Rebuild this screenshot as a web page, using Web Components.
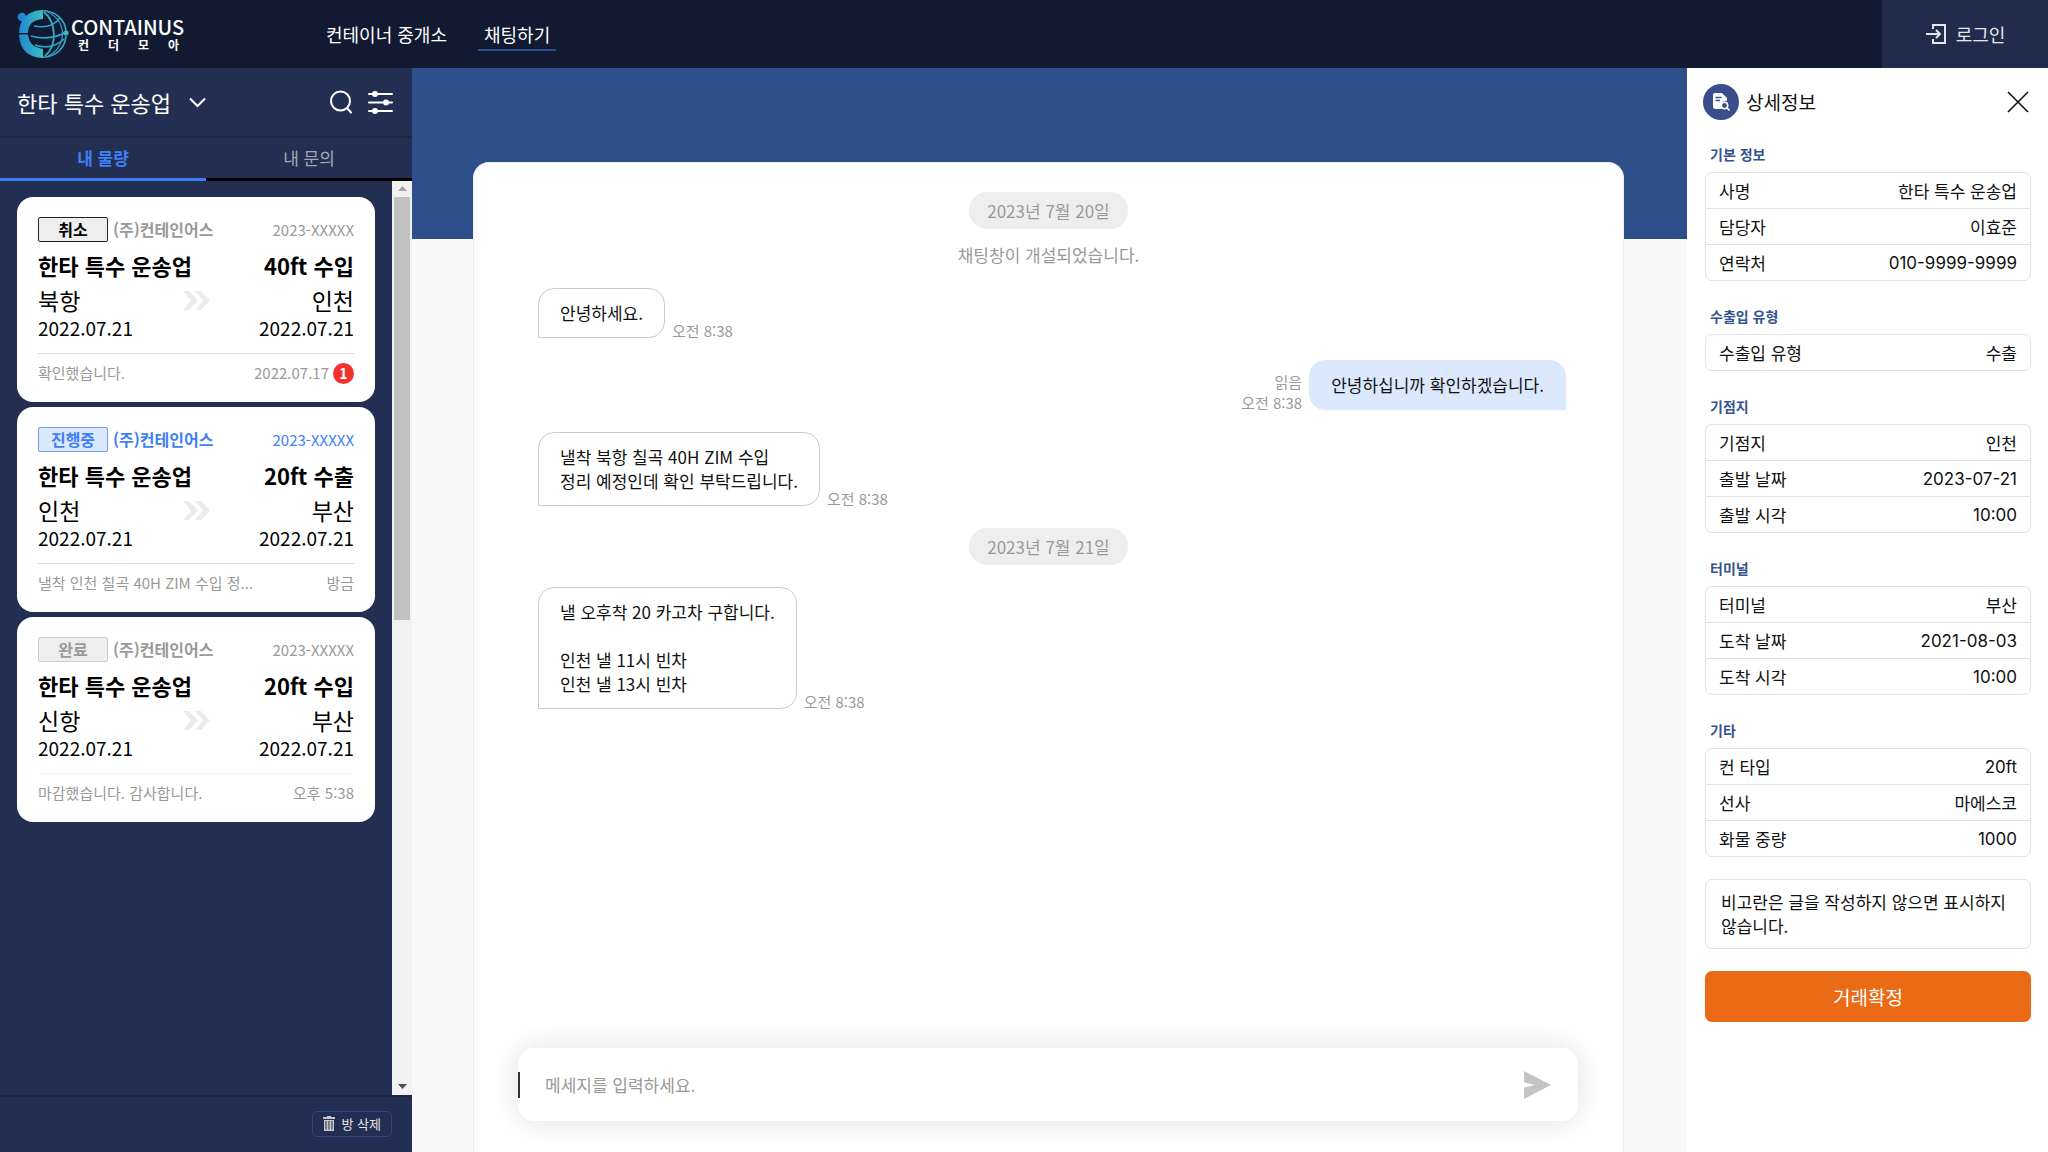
<!DOCTYPE html>
<html lang="ko">
<head>
<meta charset="utf-8">
<meta name="viewport" content="width=device-width, initial-scale=1">
<title>CONTAINUS 컨더모아</title>
<style>
	body {
		margin: 0;
		font-family: "Noto Sans CJK KR", sans-serif;
		font-size: 17px;
		line-height: 24px;
		color: #111;
	}
</style>
</head>
<body>
<containus-app></containus-app>

<script>
// Reset shared by every shadow root
const base = `
	* { box-sizing: border-box; }
	button, input, select {
		margin: 0;
		padding: 0;
		border: 0;
		background: none;
		font: inherit;
		color: inherit;
		cursor: pointer;
	}
	a { color: inherit; text-decoration: none; }
	svg { display: block; flex: none; }
`;

class SiteLogo extends HTMLElement {
	constructor() {
		super();
		this.attachShadow({ mode: 'open' }).innerHTML = `
		<style>
			${base}
			:host { display: block; }
			a { display: flex; align-items: center; gap: 2px; color: #fff; }
			.words { width: 114px; }
			.name { font-size: 20px; line-height: 22px; font-weight: 500; }
			.sub {
				display: flex;
				justify-content: space-between;
				padding: 0 6px 0 7px;
				font-size: 12px;
				line-height: 14px;
				font-weight: 700;
			}
		</style>
		<a href="#" aria-label="CONTAINUS">
			<svg width="52" height="52" viewBox="0 0 52 52" fill="none">
				<defs>
					<linearGradient id="ring" x1="0" x2="1"><stop stop-color="#2187d2"/><stop offset="1" stop-color="#3cbdbd"/></linearGradient>
				</defs>
				<circle cx="5" cy="9" r="4.3" fill="#2288d0"/>
				<path d="M26 2C18 2 11 5 7 10L4 15Q2 20 2 25H11Q11 12 26 11Z" fill="url(#ring)"/>
				<path d="M2 26.5Q3 49 26 50V41Q12 39 11 26.5Z" fill="url(#ring)"/>
				<path d="M26 2.8C39 3 48 12 49 23M49 28C48 40 39 49 26 49.2" stroke="#35adc0" stroke-width="1.6"/>
				<path d="M27 4C39 14 41 37 28 48" stroke="#35adc0" stroke-width="1.8"/>
				<path d="M29 3C42 9 47 19 45 31C43 39 38 45 31 48" stroke="#2b94c4" stroke-width="1.3"/>
				<path d="M17 18C27 20 37 18 43 10M14 28C27 32 41 29 49 24M18 37C29 41 40 38 47 31" stroke="#2fa3c7" stroke-width="1.6"/>
				<circle cx="49" cy="25" r="2.6" fill="#3cbdbd"/>
			</svg>
			<div class="words">
				<div class="name">CONTAINUS</div>
				<div class="sub"><span>컨</span><span>더</span><span>모</span><span>아</span></div>
			</div>
		</a>
		`;
	}
}

class SiteHeader extends HTMLElement {
	constructor() {
		super();
		this.attachShadow({ mode: 'open' }).innerHTML = `
		<style>
			${base}
			:host {
				display: flex;
				align-items: stretch;
				height: 68px;
				background: #121a32;
				color: #fff;
				font-size: 18px;
			}
			site-logo { padding: 8px 0 0 17px; width: 320px; }
			nav { display: flex; flex: 1; align-items: center; gap: 25px; }
			nav a { padding: 5px 6px 3px; border-bottom: 2px solid transparent; }
			nav a[aria-current] { border-color: #2b4f94; }
			.login {
				display: flex;
				align-items: center;
				justify-content: center;
				gap: 9px;
				width: 166px;
				background: #212b4b;
				color: #e4e6ec;
			}
		</style>
		<site-logo></site-logo>
		<nav>
			<a href="#">컨테이너 중개소</a>
			<a href="#" aria-current="page">채팅하기</a>
		</nav>
		<button class="login">
			<svg width="22" height="22" viewBox="0 0 22 22" fill="none" stroke="currentColor" stroke-width="2">
				<path d="M8 6V2H20V20H8V16M1 11H15M11 7L15 11L11 15"/>
			</svg>
			로그인
		</button>
		`;
	}
}

class RoomCard extends HTMLElement {
	constructor() {
		super();
		this.attachShadow({ mode: 'open' });
	}

	connectedCallback() {
		const get = name => this.getAttribute(name);
		const unread = get('unread') ? `<span class="unread">${get('unread')}</span>` : '';
		this.shadowRoot.innerHTML = `
		<style>
			${base}
			:host {
				display: block;
				padding: 20px 21px 17px;
				border-radius: 16px;
				background: #fff;
				color: #000;
				--tone: #999;
				--badge: #999;
				--badge-line: #ccc;
				--badge-fill: #eee;
				--rule: #ddd;
			}
			:host([state="cancel"]) { --badge: #000; --badge-line: #222; }
			:host([state="active"]) {
				--tone: #3f80f5;
				--badge: #3f80f5;
				--badge-line: #6c9ef5;
				--badge-fill: #dce9fd;
			}
			:host([state="done"]) { --rule: #f4f4f4; }
			.row { display: flex; align-items: center; justify-content: space-between; }
			.top { color: var(--tone); font-size: 15px; line-height: 25px; }
			.who { display: flex; gap: 5px; font-size: 16px; font-weight: 700; line-height: 24px; }
			.badge {
				width: 70px;
				height: 25px;
				border: 1px solid var(--badge-line);
				border-radius: 2px;
				background: var(--badge-fill);
				color: var(--badge);
				line-height: 23px;
				text-align: center;
			}
			h3 { margin: 0; font-size: 22px; line-height: 34px; font-weight: 700; }
			.title { padding: 6px 0 4px; }
			.city { font-size: 23px; line-height: 28px; }
			.date { font-size: 19px; line-height: 28px; }
			.foot {
				margin-top: 11px;
				padding-top: 7px;
				border-top: 1px solid var(--rule);
				color: #999;
				font-size: 15px;
			}
			.last {
				max-width: 230px;
				overflow: hidden;
				white-space: nowrap;
				text-overflow: ellipsis;
			}
			.when { display: flex; align-items: center; gap: 4px; }
			.unread {
				width: 21px;
				border-radius: 50%;
				background: #f43131;
				color: #fff;
				font-size: 14px;
				line-height: 21px;
				font-weight: 700;
				text-align: center;
			}
		</style>
		<article>
			<div class="row top">
				<div class="who"><span class="badge">${get('label')}</span>(주)컨테인어스</div>
				<span>2023-XXXXX</span>
			</div>
			<div class="row title"><h3>한타 특수 운송업</h3><h3>${get('cargo')}</h3></div>
			<div class="row city">
				<span>${get('from')}</span>
				<svg width="27" height="19" viewBox="0 0 27 19" fill="#ebebeb">
					<path d="M0 0H6L15 9.5L6 19H0L8 9.5ZM12 0H18L27 9.5L18 19H12L20 9.5Z"/>
				</svg>
				<span>${get('to')}</span>
			</div>
			<div class="row date"><span>2022.07.21</span><span>2022.07.21</span></div>
			<div class="row foot">
				<span class="last">${this.textContent}</span>
				<span class="when">${get('when')}${unread}</span>
			</div>
		</article>
		`;
	}
}

class RoomSidebar extends HTMLElement {
	constructor() {
		super();
		this.attachShadow({ mode: 'open' }).innerHTML = `
		<style>
			${base}
			:host {
				display: flex;
				flex-direction: column;
				min-height: 0;
				background: #232f52;
				color: #fff;
			}
			header {
				display: flex;
				align-items: center;
				gap: 15px;
				height: 70px;
				padding: 0 19px 0 17px;
				border-bottom: 2px solid #1b2544;
			}
			.company { display: flex; flex: 1; align-items: center; gap: 20px; }
			select { appearance: none; font-size: 22px; line-height: 34px; outline: 0; }
			option { color: #111; }
			.tabs { display: flex; height: 43px; }
			.tabs button {
				flex: 1;
				border-bottom: 3px solid #000;
				color: #a5a8b0;
			}
			.tabs [aria-selected="true"] {
				border-color: #3d7df0;
				color: #3f80f5;
				font-weight: 700;
			}
			.body { display: flex; flex: 1; min-height: 0; }
			.list {
				display: flex;
				flex: 1;
				flex-direction: column;
				gap: 5px;
				padding: 16px 17px;
				overflow: hidden;
			}
			.scroll {
				display: flex;
				flex-direction: column;
				align-items: center;
				width: 20px;
				background: #f1f1f1;
			}
			.scroll svg { margin: 5px 0; }
			.track { flex: 1; width: 16px; }
			.thumb { height: 48%; background: #c1c1c1; }
			footer {
				display: flex;
				align-items: center;
				justify-content: flex-end;
				height: 57px;
				padding: 0 20px 2px 0;
				border-top: 2px solid #1b2544;
			}
			.delete {
				display: flex;
				align-items: center;
				gap: 6px;
				height: 26px;
				padding: 0 10px;
				border: 1px solid #2c4780;
				border-radius: 5px;
				font-size: 13px;
				color: #e6e6e6;
			}
		</style>
		<header>
			<div class="company">
				<select aria-label="업체 선택"><option>한타 특수 운송업</option></select>
				<svg width="17" height="11" viewBox="0 0 17 11" fill="none" stroke="#fff" stroke-width="2"><path d="M1 1.5L8.5 9L16 1.5"/></svg>
			</div>
			<button aria-label="검색">
				<svg width="24" height="24" viewBox="0 0 24 24" fill="none" stroke="#fff" stroke-width="2" stroke-linecap="round"><circle cx="11.5" cy="11" r="9.5"/><path d="M18 18L22 22.5"/></svg>
			</button>
			<button aria-label="필터">
				<svg width="25" height="23" viewBox="0 0 25 23" fill="#fff" stroke="#fff" stroke-width="2" stroke-linecap="round">
					<path d="M1 3H24M1 11.5H24M1 20H24"/><circle cx="7" cy="3" r="2"/><circle cx="18" cy="11.5" r="2"/><circle cx="7" cy="20" r="2"/>
				</svg>
			</button>
		</header>
		<div class="tabs" role="tablist">
			<button role="tab" aria-selected="true">내 물량</button>
			<button role="tab" aria-selected="false">내 문의</button>
		</div>
		<div class="body">
			<div class="list"><slot></slot></div>
			<div class="scroll" aria-hidden="true">
				<svg width="9" height="6" viewBox="0 0 9 6" fill="#a3a3a3"><path d="M0 5H9L4.5 0Z"/></svg>
				<div class="track"><div class="thumb"></div></div>
				<svg width="9" height="6" viewBox="0 0 9 6" fill="#505050"><path d="M0 0H9L4.5 5Z"/></svg>
			</div>
		</div>
		<footer>
			<button class="delete">
				<svg width="12" height="15" viewBox="0 0 12 15" fill="#c8c8c8">
					<path fill-rule="evenodd" d="M0 1H4V0H8V1H12V3H0ZM1 4H11V15H1ZM2.5 5V13.5H3.5V5ZM5.5 5V13.5H6.5V5ZM8.5 5V13.5H9.5V5Z"/>
				</svg>
				방 삭제
			</button>
		</footer>
		`;
	}
}

class ChatDate extends HTMLElement {
	constructor() {
		super();
		this.attachShadow({ mode: 'open' }).innerHTML = `
		<style>
			:host {
				display: block;
				align-self: center;
				padding: 0 18px;
				border-radius: 18px;
				background: #eee;
				color: #999;
				line-height: 37px;
			}
		</style>
		<slot></slot>
		`;
	}
}

class ChatMessage extends HTMLElement {
	constructor() {
		super();
		this.attachShadow({ mode: 'open' });
	}

	connectedCallback() {
		const read = this.hasAttribute('mine') ? '읽음<br>' : '';
		this.shadowRoot.innerHTML = `
		<style>
			:host { display: flex; align-items: flex-end; gap: 7px; padding-left: 64px; }
			:host([mine]) { flex-direction: row-reverse; padding: 0 57px 0 0; }
			.bubble {
				padding: 12px 21px;
				border: 1px solid #ccc;
				border-radius: 16px 16px 16px 0;
			}
			:host([mine]) .bubble {
				border-color: #dce9fd;
				border-radius: 16px 16px 0 16px;
				background: #dce9fd;
			}
			.time {
				margin-bottom: -3px;
				color: #999;
				font-size: 15px;
				line-height: 21px;
				text-align: right;
			}
		</style>
		<div class="bubble"><slot></slot></div>
		<div class="time">${read}오전 8:38</div>
		`;
	}
}

class ChatRoom extends HTMLElement {
	constructor() {
		super();
		this.attachShadow({ mode: 'open' }).innerHTML = `
		<style>
			${base}
			:host {
				display: flex;
				flex-direction: column;
				min-width: 0;
				padding: 94px 63px 0 61px;
				background: linear-gradient(#2f4f8a 171px, #f9f9f9 171px);
			}
			.sheet {
				display: flex;
				flex: 1;
				flex-direction: column;
				padding: 29px 0 31px;
				border: 1px solid #eee;
				border-bottom: 0;
				border-radius: 16px 16px 0 0;
				background: #fff;
			}
			.log { display: flex; flex: 1; flex-direction: column; gap: 22px; }
			form {
				display: flex;
				align-items: center;
				height: 73px;
				margin: 0 45px 0 44px;
				padding-right: 27px;
				border-radius: 16px;
				background: #fff;
				box-shadow: 0 0 32px rgba(0, 0, 0, 0.12);
			}
			form::before { content: ""; width: 2px; height: 26px; background: #333; }
			input { flex: 1; min-width: 0; padding-left: 25px; outline: 0; cursor: text; }
			input::placeholder { color: #999; opacity: 1; }
		</style>
		<div class="sheet">
			<div class="log"><slot></slot></div>
			<form>
				<input type="text" aria-label="메세지" placeholder="메세지를 입력하세요.">
				<button type="button" aria-label="보내기">
					<svg width="27" height="28" viewBox="0 0 27 28" fill="#c4c4c4"><path d="M0 0L27 14L0 28V16.5L11 14L0 11.5Z"/></svg>
				</button>
			</form>
		</div>
		`;
	}
}

class InfoTable extends HTMLElement {
	constructor() {
		super();
		this.attachShadow({ mode: 'open' });
	}

	connectedCallback() {
		// One "label | value" pair per line
		const rows = this.textContent.trim().split('\n').map(line => {
			const [label, value] = line.split('|').map(s => s.trim());
			const latin = /^[\x20-\x7e]+$/.test(value) ? ' class="latin"' : '';
			return `<tr><th scope="row">${label}</th><td${latin}>${value}</td></tr>`;
		}).join('');
		this.shadowRoot.innerHTML = `
		<style>
			:host { display: block; }
			table {
				width: 100%;
				border: 1px solid #e1e2e8;
				border-radius: 7px;
				border-spacing: 0;
			}
			caption {
				padding: 0 5px 6px;
				color: #34548f;
				font-size: 14px;
				font-weight: 700;
				text-align: left;
			}
			th, td { height: 35px; padding: 0 13px; line-height: 24px; }
			tr + tr > * { border-top: 1px solid #e1e2e8; }
			th { font-weight: 400; text-align: left; }
			td { text-align: right; }
			.latin { font-family: Inter, sans-serif; }
		</style>
		<table><caption>${this.getAttribute('heading')}</caption><tbody>${rows}</tbody></table>
		`;
	}
}

class DetailPanel extends HTMLElement {
	constructor() {
		super();
		this.attachShadow({ mode: 'open' }).innerHTML = `
		<style>
			${base}
			:host {
				display: flex;
				flex-direction: column;
				gap: 22px;
				padding: 16px 17px 16px 18px;
				background: #fff;
			}
			header { display: flex; align-items: center; height: 36px; padding-right: 2px; margin-left: -2px; }
			.icon {
				display: grid;
				place-items: center;
				width: 36px;
				height: 36px;
				border-radius: 50%;
				background: #394e8b;
			}
			h2 { flex: 1; margin: 0 0 0 7px; font-size: 19px; font-weight: 400; }
			p {
				margin: 0;
				padding: 10px 15px;
				border: 1px solid #e1e2e8;
				border-radius: 7px;
			}
			.confirm {
				height: 51px;
				border-radius: 7px;
				background: #ea6a15;
				color: #fff;
				font-size: 19px;
			}
		</style>
		<header>
			<span class="icon">
				<svg width="18" height="18" viewBox="0 0 18 18" fill="none">
					<path d="M1 2Q1 0 3 0H10L15 5V8A5 5 0 0 0 10 16H3Q1 16 1 14Z" fill="#fff"/>
					<path d="M3.5 4.5H9.5M3.5 7.5H8" stroke="#394e8b" stroke-width="1.4"/>
					<circle cx="12.5" cy="12.5" r="3.2" stroke="#fff" stroke-width="1.6"/>
					<path d="M15 15L17.5 17.5" stroke="#fff" stroke-width="1.6"/>
				</svg>
			</span>
			<h2>상세정보</h2>
			<button aria-label="닫기">
				<svg width="22" height="22" viewBox="0 0 22 22" stroke="#111" stroke-width="1.6"><path d="M1 1L21 21M21 1L1 21"/></svg>
			</button>
		</header>
		<slot></slot>
		<p>비고란은 글을 작성하지 않으면 표시하지 않습니다.</p>
		<button class="confirm">거래확정</button>
		`;
	}
}

class ContainusApp extends HTMLElement {
	constructor() {
		super();
		this.attachShadow({ mode: 'open' }).innerHTML = `
		<style>
			:host {
				display: grid;
				grid-template: auto minmax(0, 1fr) / 412px minmax(0, 1fr) 361px;
				min-height: 100vh;
			}
			site-header { grid-column: 1 / -1; }
			.notice { color: #999; text-align: center; margin: -8px 0 -1px; }
			info-table + info-table { margin-top: 1px; }
		</style>
		<site-header></site-header>
		<room-sidebar>
			<room-card state="cancel" label="취소" cargo="40ft 수입" from="북항" to="인천" when="2022.07.17" unread="1">확인했습니다.</room-card>
			<room-card state="active" label="진행중" cargo="20ft 수출" from="인천" to="부산" when="방금">낼착 인천 칠곡 40H ZIM 수입 정...</room-card>
			<room-card state="done" label="완료" cargo="20ft 수입" from="신항" to="부산" when="오후 5:38">마감했습니다. 감사합니다.</room-card>
		</room-sidebar>
		<chat-room>
			<chat-date>2023년 7월 20일</chat-date>
			<div class="notice">채팅창이 개설되었습니다.</div>
			<chat-message>안녕하세요.</chat-message>
			<chat-message mine>안녕하십니까 확인하겠습니다.</chat-message>
			<chat-message>낼착 북항 칠곡 40H ZIM 수입<br>정리 예정인데 확인 부탁드립니다.</chat-message>
			<chat-date>2023년 7월 21일</chat-date>
			<chat-message>낼 오후착 20 카고차 구합니다.<br><br>인천 낼 11시 빈차<br>인천 낼 13시 빈차</chat-message>
		</chat-room>
		<detail-panel>
			<info-table heading="기본 정보">
				사명 | 한타 특수 운송업
				담당자 | 이효준
				연락처 | 010-9999-9999
			</info-table>
			<info-table heading="수출입 유형">
				수출입 유형 | 수출
			</info-table>
			<info-table heading="기점지">
				기점지 | 인천
				출발 날짜 | 2023-07-21
				출발 시각 | 10:00
			</info-table>
			<info-table heading="터미널">
				터미널 | 부산
				도착 날짜 | 2021-08-03
				도착 시각 | 10:00
			</info-table>
			<info-table heading="기타">
				컨 타입 | 20ft
				선사 | 마에스코
				화물 중량 | 1000
			</info-table>
		</detail-panel>
		`;
	}
}

customElements.define('site-logo', SiteLogo);
customElements.define('site-header', SiteHeader);
customElements.define('room-card', RoomCard);
customElements.define('room-sidebar', RoomSidebar);
customElements.define('chat-date', ChatDate);
customElements.define('chat-message', ChatMessage);
customElements.define('chat-room', ChatRoom);
customElements.define('info-table', InfoTable);
customElements.define('detail-panel', DetailPanel);
customElements.define('containus-app', ContainusApp);
</script>
</body>
</html>
